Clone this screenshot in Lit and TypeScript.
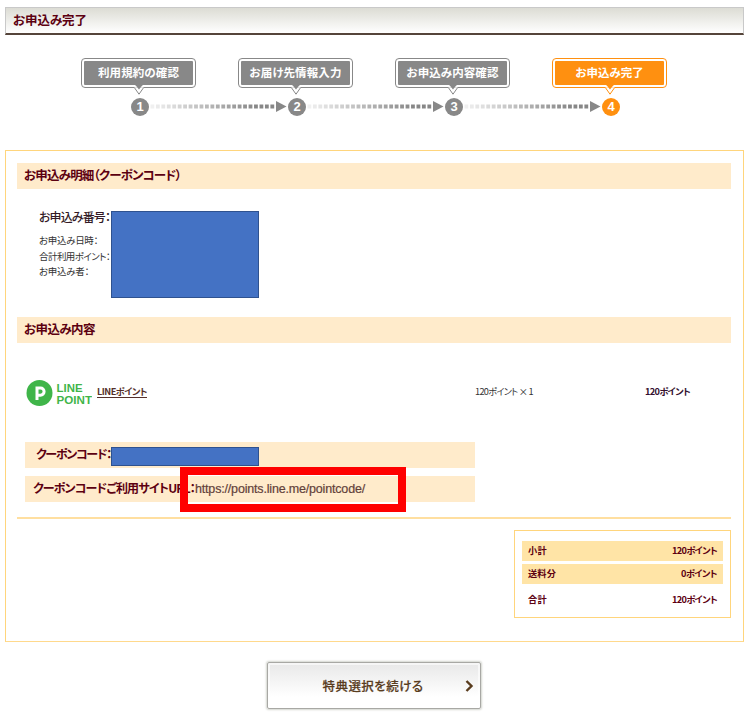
import { LitElement, html, css, svg } from "lit";
import { customElement, property } from "lit/decorators.js";

/** One line of text whose tracking is adjusted to fill a given width. */
@customElement("fit-text")
class FitText extends LitElement {
  @property() text = "";
  @property({ type: Number }) width = 0;
  static styles = css`
    :host { display: inline-block; white-space: pre; flex: none; }
    .run { display: inline-block; font-feature-settings: "palt"; }
  `;
  render() {
    return html`<span class="run">${this.text}</span>`;
  }
  updated() {
    const run = this.renderRoot.querySelector(".run") as HTMLElement;
    run.style.letterSpacing = "0px";
    const natural = run.getBoundingClientRect().width;
    run.style.letterSpacing = `${(this.width - natural) / this.text.length}px`;
  }
}

const t = (text: string, width: number, cls = "") =>
  html`<fit-text class=${cls} .text=${text} .width=${width}></fit-text>`;

const STEPS: [string, number][] = [
  ["利用規約の確認", 81],
  ["お届け先情報入力", 92],
  ["お申込み内容確認", 92],
  ["お申込み完了", 68],
];

@customElement("app-root")
class AppRoot extends LitElement {
  static styles = css`
    :host {
      display: block; box-sizing: border-box; width: 750px; height: 720px;
      padding: 7px 6px 0 5px; background: #fff; color: #5c0011; overflow: hidden;
      font-family: "Noto Sans CJK JP", sans-serif; line-height: 1;
    }
    * { box-sizing: border-box; }
    svg { display: block; flex: none; }
    .title {
      height: 28px; padding: 0 7px 1px; display: flex; align-items: center;
      border: 1px solid #c9c9c9; border-bottom: 2px solid #55443a;
      background: linear-gradient(#dcdcd4, #fff);
      font-size: 12.5px; font-weight: 700;
    }
    .steps { display: flex; margin: 23px 0 0 76px; height: 92px; }
    .step { width: 157px; flex: none; color: #888; }
    .step.on { color: #ff9010; width: 116px; }
    .bubble {
      position: relative; width: 115px; height: 30px; padding: 2px;
      border: 1px solid currentColor; border-radius: 4px;
    }
    .label { height: 100%; background: currentColor; display: flex; align-items: center; justify-content: center; border-radius: 1px; }
    .label fit-text { color: #fff; font-size: 11.5px; font-weight: 700; }
    .tail { position: absolute; left: 51px; top: 25px; }
    .track { display: flex; align-items: center; margin: 9px 0 0 50px; height: 19px; }
    .num {
      width: 18px; height: 18px; border-radius: 50%; background: currentColor; flex: none;
      display: flex; align-items: center; justify-content: center;
    }
    .num span { color: #fff; font: 700 13px/18px "Liberation Sans", sans-serif; }
    .panel { height: 492px; border: 1px solid #ffd57c; border-bottom-color: #ffd98c; padding: 12px 12px 0 11px; }
    .bar {
      height: 26px; padding: 0 7px 2px; background: #ffebcb; display: flex; align-items: center;
      font-size: 12.5px; font-weight: 700;
    }
    .meta { display: flex; height: 128px; padding: 22px 0 0 22px; color: #333; }
    .names { width: 72px; display: flex; flex-direction: column; font-size: 9.5px; }
    .names fit-text { height: 15.5px; line-height: 15.5px; }
    .names .lead { font-size: 12px; font-weight: 500; height: 16px; line-height: 12px; margin: 0 0 6px; color: #331a26; }
    .mask { background: #4472c4; border: 1px solid #2f528f; width: 148px; height: 87px; }
    .item { display: flex; height: 99px; padding: 37px 0 0 9px; color: #333; font-size: 9.2px; }
    .logo { margin-right: 5px; }
    .brand { font: 700 11.5px "Liberation Sans", sans-serif; fill: #3fb549; }
    .item fit-text { height: 11px; line-height: 11px; margin-top: 6px; }
    .item .link { height: 12px; color: #55302a; font-weight: 700; border-bottom: 1px solid #55302a; }
    .qty { margin-left: 328px; }
    .sum { margin-left: 112px; color: #33102e; font-weight: 700; }
    .codes { padding-left: 8px; display: flex; flex-direction: column; gap: 8px; }
    .code {
      width: 450px; height: 26px; background: #ffebcb; display: flex; align-items: center;
      padding-left: 11px; font-size: 12px; font-weight: 700; position: relative;
    }
    .code fit-text { margin-top: -2px; }
    .code .mask { height: 19px; margin: 3px 0 0; }
    .code.url { padding-left: 8px; }
    .code .href { color: #62413a; font-family: "Liberation Sans", sans-serif; font-size: 12.5px; font-weight: 400; -webkit-text-stroke: 0.2px; margin-top: 1px; }
    .frame { position: absolute; left: 155px; top: -9px; width: 226px; height: 45px; border: 8px solid #f00; }
    .rule { height: 2px; background: #ffdfa0; margin-top: 15px; }
    .totals {
      width: 217px; height: 88px; margin: 11px 0 0 auto; padding: 10px 7px 0;
      border: 1px solid #ffd57c; display: flex; flex-direction: column; gap: 3px;
      font-size: 9.2px; font-weight: 700;
    }
    .total { height: 20px; padding: 0 6px; display: flex; align-items: center; justify-content: space-between; background: #ffe4a6; }
    .total.last { background: none; height: 24px; padding-top: 2px; }
    .next {
      position: relative; width: 214px; height: 47px; margin: 20px 0 0 262px; padding: 1px 2px 0 0; display: flex;
      align-items: center; justify-content: center; border: 1px solid #a8a8a4; border-radius: 2px;
      background: linear-gradient(#e8e8e8, #fff 75%); box-shadow: 0 0 2px 1px #d3d5cf, inset 0 0 0 2px #fff9;
      font-size: 12.5px; font-weight: 500; color: #593c1e; -webkit-text-stroke: 0.2px;
    }
    .chev { position: absolute; left: 197px; top: 17px; }
  `;

  dots() {
    return svg`${Array.from({ length: 23 }, (_, i) => {
      const v = Math.round(240 - Math.min(1, i / 19) * 105);
      return svg`<rect x=${1.5 + i * 5.45} y="7.5" width="3.8" height="4" fill="rgb(${v},${v},${v})"/>`;
    })}<path d="M127 4L137.5 9.5L127 15Z" fill="#888"/>`;
  }

  render() {
    return html`
      <header class="title">${t("お申込み完了", 74)}</header>
      <nav class="steps">
        ${STEPS.map(([label, w], i) => html`
          <div class="step ${i === 3 ? "on" : ""}">
            <div class="bubble">
              <div class="label">${t(label, w)}</div>
              <svg class="tail" width="12" height="12" viewBox="0 0 12 12">
                <path d="M1 3.2L6 10.2L11 3.2Z" fill="#fff"/>
                <path d="M1.3 3.5L6 10.2L10.7 3.5" fill="none" stroke="currentColor"/>
                <path d="M2.6 0H9.4V1.3L6 5.5L2.6 1.3Z" fill="currentColor"/>
              </svg>
            </div>
            <div class="track">
              <div class="num"><span>${i + 1}</span></div>
              ${i < 3 ? html`<svg width="139" height="19">${this.dots()}</svg>` : ""}
            </div>
          </div>`)}
      </nav>
      <main class="panel">
        <div class="bar">${t("お申込み明細（クーポンコード）", 157)}</div>
        <section class="meta">
          <div class="names">
            ${t("お申込み番号：", 71, "lead")}
            ${t("お申込み日時：", 59)}
            ${t("合計利用ポイント：", 71)}
            ${t("お申込み者：", 50)}
          </div>
          <div class="mask"></div>
        </section>
        <div class="bar">${t("お申込み内容", 71)}</div>
        <section class="item">
          <svg class="logo" width="66" height="28" viewBox="0 0 66 28">
            <circle cx="13.5" cy="13" r="13" fill="#3fb549"/>
            <path d="M11 20V8H14.5A3.6 3.6 0 0 1 14.5 15.2H11" fill="none" stroke="#fff" stroke-width="3"/>
            <text class="brand" x="30.5" y="12" textLength="26" lengthAdjust="spacingAndGlyphs">LINE</text>
            <text class="brand" x="30.5" y="24" textLength="35.5" lengthAdjust="spacingAndGlyphs">POINT</text>
          </svg>
          ${t("LINEポイント", 50, "link")}
          ${t("120ポイント × 1", 58, "qty")}
          ${t("120ポイント", 45, "sum")}
        </section>
        <section class="codes">
          <div class="code">${t("クーポンコード：", 75)}<div class="mask"></div></div>
          <div class="code url">
            ${t("クーポンコードご利用サイトURL：", 162)}
            ${t("https://points.line.me/pointcode/", 170, "href")}
            <div class="frame"></div>
          </div>
        </section>
        <div class="rule"></div>
        <section class="totals">
          <div class="total">${t("小計", 19)}${t("120ポイント", 45)}</div>
          <div class="total">${t("送料分", 28)}${t("0ポイント", 36)}</div>
          <div class="total last">${t("合計", 19)}${t("120ポイント", 45)}</div>
        </section>
      </main>
      <div class="next">
        ${t("特典選択を続ける", 101)}
        <svg class="chev" width="9" height="12" viewBox="0 0 9 12"><path d="M1.5 1L6.5 6L1.5 11" fill="none" stroke="#593c1e" stroke-width="2.4"/></svg>
      </div>
    `;
  }
}
